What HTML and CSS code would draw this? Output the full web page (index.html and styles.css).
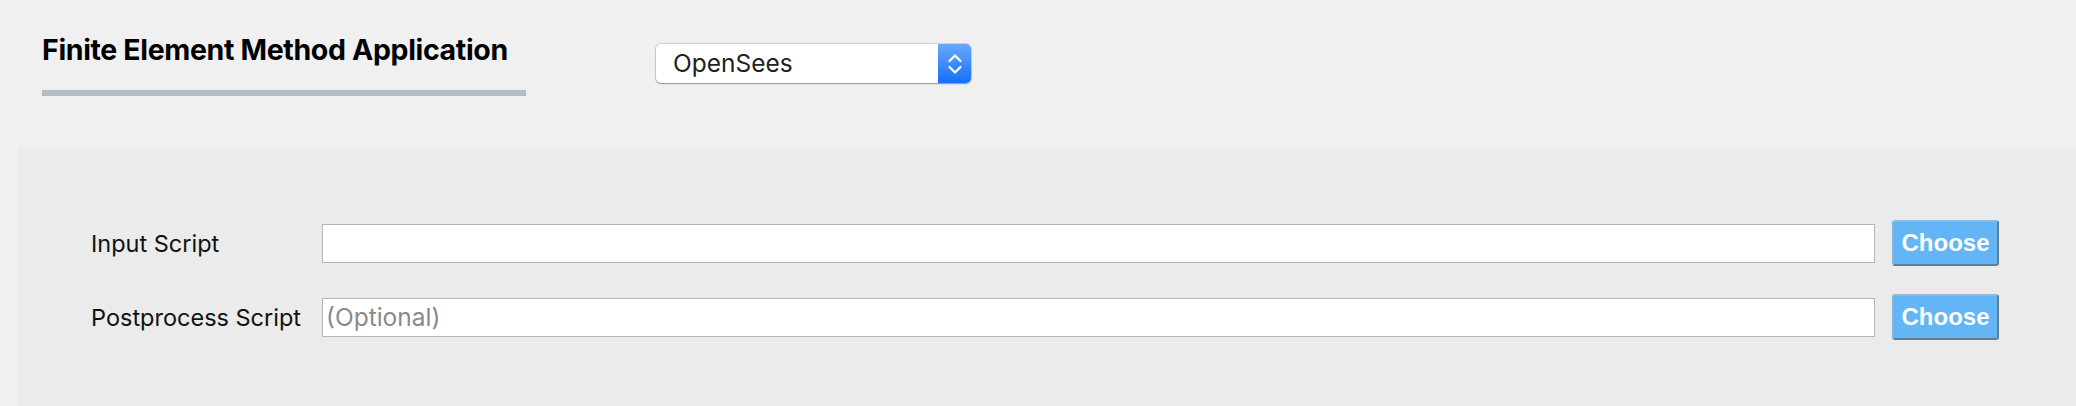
FILE: index.html
```html
<!DOCTYPE html>
<html>
<head>
<meta charset="utf-8">
<link rel="stylesheet" href="styles.css">
</head>
<body>
<div class="page">
  <header class="header">
    <div class="title-block">
      <h1 class="title">Finite Element Method Application</h1>
      <div class="title-rule"></div>
    </div>
    <div class="select">
      <span class="select-value">OpenSees</span>
      <span class="select-arrows">
        <svg width="16" height="26" viewBox="0 0 16 26">
          <path d="M2.5 10 L8 4.5 L13.5 10" fill="none" stroke="#fff" stroke-width="2.2" stroke-linecap="round" stroke-linejoin="round"/>
          <path d="M2.5 16 L8 21.5 L13.5 16" fill="none" stroke="#fff" stroke-width="2.2" stroke-linecap="round" stroke-linejoin="round"/>
        </svg>
      </span>
    </div>
  </header>
  <section class="panel">
    <div class="form">
      <label class="label">Input Script</label>
      <div class="field"></div>
      <button class="choose">Choose</button>

      <label class="label">Postprocess Script</label>
      <div class="field"><span class="placeholder">(Optional)</span></div>
      <button class="choose">Choose</button>
    </div>
  </section>
</div>
</body>
</html>
```
FILE: styles.css
```css
html, body {
  margin: 0;
  padding: 0;
  background: #f0f0f0;
}

.page {
  width: 2076px;
  height: 406px;
  display: flex;
  flex-direction: column;
  overflow: hidden;
}

.header {
  display: flex;
  align-items: flex-start;
  padding: 32px 0 0 42px;
  height: 148px;
  box-sizing: border-box;
  flex-shrink: 0;
}

.title-block {
  width: 484px;
}

.title {
  margin: 0;
  font-family: Inter, "Liberation Sans", sans-serif;
  font-weight: 700;
  font-size: 28.5px;
  line-height: 36px;
  color: #000;
  letter-spacing: -0.35px;
}

.title-rule {
  margin-top: 22px;
  height: 6px;
  background: #b0bec5;
}

.select {
  margin: 12px 0 0 130px;
  width: 315px;
  height: 39px;
  display: flex;
  align-items: stretch;
  background: #fff;
  border-radius: 5px;
  box-shadow: 0 0 0 1px rgba(0,0,0,0.12), 0 1px 1.5px rgba(0,0,0,0.3);
  overflow: hidden;
}

.select-value {
  flex: 1;
  padding-left: 17px;
  font-family: Inter, "Liberation Sans", sans-serif;
  font-size: 24.5px;
  line-height: 39px;
  color: #222;
}

.select-arrows {
  width: 33px;
  display: flex;
  align-items: center;
  justify-content: center;
  background: linear-gradient(#6aa8f8, #1470fb);
}

.panel {
  flex: 1;
  margin-left: 18px;
  background: #ebebeb;
  padding: 72px 77px 0 73px;
}

.form {
  display: grid;
  grid-template-columns: 214px 1fr 107px;
  grid-auto-rows: 46px;
  column-gap: 17px;
  row-gap: 28px;
  align-items: center;
}

.label {
  font-family: Inter, "Liberation Sans", sans-serif;
  font-size: 23.5px;
  color: #111;
  white-space: nowrap;
}

.field {
  grid-column: 2;
  height: 39px;
  box-sizing: border-box;
  background: #fff;
  border: 1.5px solid #b5b5b5;
  display: flex;
  align-items: center;
  padding-left: 3px;
}

.placeholder {
  font-family: Inter, "Liberation Sans", sans-serif;
  font-size: 24.5px;
  color: #8a8a8a;
}

.choose {
  height: 46px;
  width: 107px;
  box-sizing: border-box;
  padding: 0;
  background: #64b5f6;
  border-style: solid;
  border-width: 2px;
  border-color: #8dbcd8 #5e7f96 #5e7f96 #80b4d4;
  border-radius: 3px;
  color: #fff;
  font-family: "Liberation Sans", Arial, sans-serif;
  font-weight: 700;
  font-size: 24px;
  line-height: 40px;
}
```
